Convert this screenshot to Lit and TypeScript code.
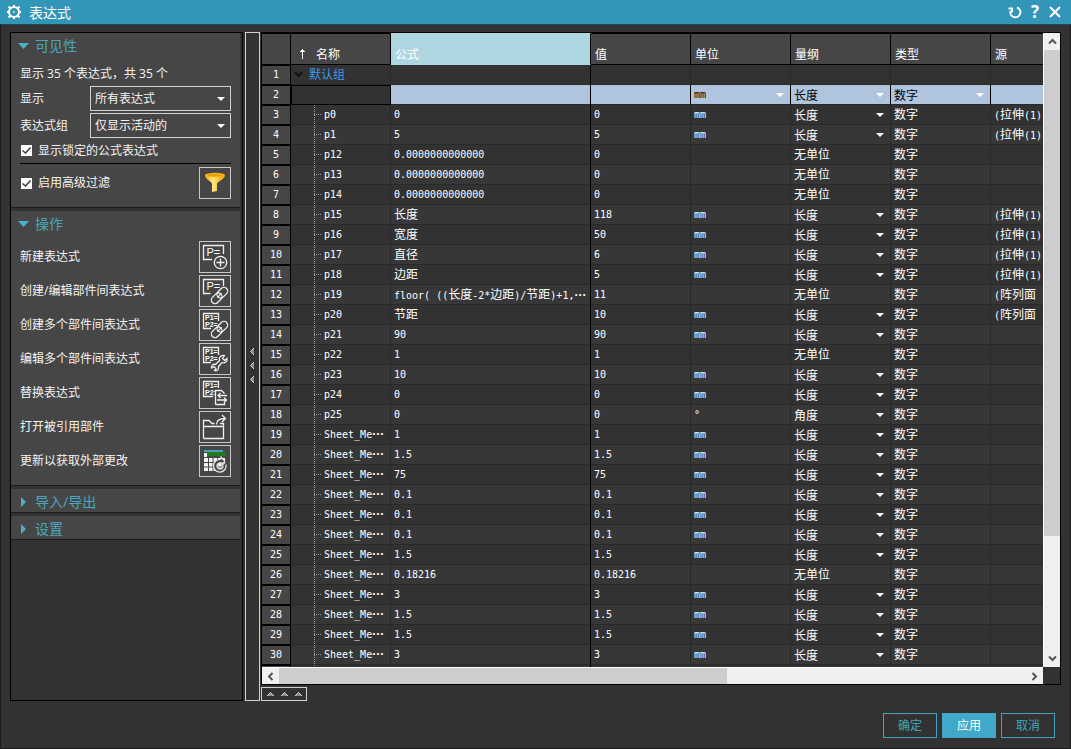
import { LitElement, html, css, nothing, TemplateResult } from "lit";
import { customElement, property } from "lit/decorators.js";
import { classMap } from "lit/directives/class-map.js";

interface Expression {
  name: string;
  formula: string;
  value: string;
  unit: string;
  dimension: string;
  source: string;
}

const LENGTH = "长度";
const NO_UNIT = "无单位";

function row(name: string, formula: string, value: string, unit = "mm", dimension = LENGTH, source = ""): Expression {
  return { name, formula, value, unit, dimension, source };
}

const sheet = (value: string, unit = "mm", dimension = LENGTH) => row("Sheet_Me···", value, value, unit, dimension);

const EXPRESSIONS: Expression[] = [
  row("p0", "0", "0", "mm", LENGTH, "(拉伸(1)"),
  row("p1", "5", "5", "mm", LENGTH, "(拉伸(1)"),
  row("p12", "0.0000000000000", "0", "", NO_UNIT),
  row("p13", "0.0000000000000", "0", "", NO_UNIT),
  row("p14", "0.0000000000000", "0", "", NO_UNIT),
  row("p15", "长度", "118", "mm", LENGTH, "(拉伸(1)"),
  row("p16", "宽度", "50", "mm", LENGTH, "(拉伸(1)"),
  row("p17", "直径", "6", "mm", LENGTH, "(拉伸(1)"),
  row("p18", "边距", "5", "mm", LENGTH, "(拉伸(1)"),
  row("p19", "floor( ((长度-2*边距)/节距)+1,···", "11", "", NO_UNIT, "(阵列面"),
  row("p20", "节距", "10", "mm", LENGTH, "(阵列面"),
  row("p21", "90", "90"),
  row("p22", "1", "1", "", NO_UNIT),
  row("p23", "10", "10"),
  row("p24", "0", "0"),
  row("p25", "0", "0", "°", "角度"),
  sheet("1"),
  sheet("1.5"),
  sheet("75"),
  sheet("0.1"),
  sheet("0.1"),
  sheet("0.1"),
  sheet("1.5"),
  sheet("0.18216", "", NO_UNIT),
  sheet("3"),
  sheet("1.5"),
  sheet("1.5"),
  sheet("3"),
];

/** Wraps the wide characters and the trailing dots of a mixed string in their own faces. */
function mixed(text: string) {
  return text
    .split(/([\u4e00-\u9fff]+|\u00b7+)/)
    .filter((part) => part)
    .map((part) => {
      if (part[0] === "\u00b7") return html`<span class="dots">${part}</span>`;
      return /[\u4e00-\u9fff]/.test(part) ? html`<span class="wide">${part}</span>` : part;
    });
}

const icons: Record<string, TemplateResult> = {
  filter: html`<svg viewBox="1 1 30 30">
    <defs>
      <linearGradient id="gold" x1="0" x2="1">
        <stop offset="0" stop-color="#f0a800" /><stop offset="0.4" stop-color="#ffe880" />
        <stop offset="1" stop-color="#e89a00" />
      </linearGradient>
    </defs>
    <path d="M6 8C6 13 13 14 13 17V25L18 24V17C18 14 26 13 26 8Z" fill="url(#gold)" />
    <ellipse cx="16" cy="8" rx="10" ry="2.2" fill="#f8b414" />
    <ellipse cx="16" cy="8.2" rx="7.5" ry="1.1" fill="#e0a010" />
  </svg>`,
  create: html`<svg viewBox="1 1 30 30" class="line">
    <path d="M13 18.500H4.500V4.500H24.500V13" />
    <text x="7.5" y="15" class="big">P=</text>
    <circle cx="21.5" cy="21.5" r="6.2" />
    <path d="M17.500 21.500H25.500M21.500 17.500V25.500" />
  </svg>`,
  link: html`<svg viewBox="1 1 30 30" class="line">
    <path d="M11.500 18.500H4.500V4.500H24.500V11" />
    <text x="7.5" y="15" class="big">P=</text>
    <g transform="rotate(-45 20.5 20.5)">
      <rect x="10.500" y="16.800" width="12" height="7.400" rx="3.700" />
      <rect x="18.500" y="16.800" width="12" height="7.400" rx="3.700" />
      <path d="M17.500 20.500H23.500" />
    </g>
  </svg>`,
  linkMany: html`<svg viewBox="1 1 30 30" class="line">
    <path d="M12 19.500H4.500V4.500H19.500V12" />
    <text x="6" y="11" class="small">P1=</text>
    <text x="6" y="18" class="small">P2=</text>
    <g transform="rotate(-45 20.5 20.5)">
      <rect x="10.500" y="16.800" width="12" height="7.400" rx="3.700" />
      <rect x="18.500" y="16.800" width="12" height="7.400" rx="3.700" />
      <path d="M17.500 20.500H23.500" />
    </g>
  </svg>`,
  editMany: html`<svg viewBox="1 1 30 30" class="line">
    <path d="M12 19.500H4.500V4.500H19.500V12" />
    <text x="6" y="11" class="small">P1=</text>
    <text x="6" y="18" class="small">P2=</text>
    <path
      d="M25.500 12.500C22 11.500 19.500 14.500 20.500 17.500L16.500 21.500C14 20.500 12 23 12.500 25L15 23.500L17 25.500L15.500 27.500C18 28.500 20.500 26 19.500 23.500L23 19.500C26 20.500 28.500 18.500 28 15.500L25.500 17.500L23.500 15.500Z" />
  </svg>`,
  replace: html`<svg viewBox="1 1 30 30" class="line">
    <path d="M14 19.500H4.500V4.500H19.500V11" />
    <text x="6" y="11" class="small">P1=</text>
    <text x="6" y="18" class="small">P2:</text>
    <path d="M16.500 27.500V13.500H22.500L25.500 16.500M16.500 27.500H25.500V25.500" />
    <path d="M28 18.500H19M21.500 16L19 18.500L21.500 21M18 23H27.500M25 20.500L27.500 23L25 25.500" />
  </svg>`,
  open: html`<svg viewBox="1 1 30 30" class="line">
    <path d="M4.500 27.500V9.500H10L13 12.500H15.500M4.500 15.500H24.500V27.500H4.500M21 12.500H24.500V15.500" />
    <path d="M17.500 13.500C17.500 9.500 20 7.500 26.500 7.500M23 4L26.500 7.500L23 11" />
  </svg>`,
  update: html`<svg viewBox="1 1 30 30">
    <rect x="5" y="5" width="19" height="2" fill="#4a9cb8" />
    <rect x="7" y="7" width="20" height="4" fill="#1e7a1e" />
    <path d="M5 8V26H26V12H8V8Z" fill="#f4f4f4" />
    <path d="M5 12.500H26M5 17.500H26M5 22H26M9.500 12V26M14 12V26M18.500 12V26M23 12V26" stroke="#464646" fill="none" />
    <g fill="none">
      <circle cx="21" cy="21" r="5" stroke="#464646" stroke-width="3.500" />
      <path d="M27 19.500A6.300 6.300 0 1 1 21.500 14.500M24 21A3 3 0 1 1 21.500 18H25.500M21.500 11.500L25.500 15.500V18L22 21"
        stroke="#e4e4e4" stroke-width="1.300" />
    </g>
  </svg>`,
};

const ACTIONS: Array<[string, string]> = [
  ["新建表达式", "create"],
  ["创建/编辑部件间表达式", "link"],
  ["创建多个部件间表达式", "linkMany"],
  ["编辑多个部件间表达式", "editMany"],
  ["替换表达式", "replace"],
  ["打开被引用部件", "open"],
  ["更新以获取外部更改", "update"],
];

const baseStyles = css`
  * {
    box-sizing: border-box;
  }
  button,
  input,
  select {
    margin: 0;
    padding: 0;
    font: inherit;
    color: inherit;
    border-radius: 0;
  }
  button {
    border: 0;
    background: none;
  }
`;

@customElement("panel-group")
class PanelGroup extends LitElement {
  @property() heading = "";
  @property({ type: Boolean }) open = false;

  static styles = [
    baseStyles,
    css`
      :host {
        display: block;
        background: #464646;
        border-bottom: 1px solid #1c1c1c;
      }
      .heading {
        display: flex;
        align-items: center;
        gap: 6px;
        width: 100%;
        height: 23px;
        padding: 3px 7px 0;
        font-size: 14px;
        line-height: 20px;
        color: #4aa6be;
      }
      .heading svg {
        width: 11px;
        height: 11px;
        fill: #4cb0c8;
      }
      .body {
        padding: 6px 9px 8px;
      }
    `,
  ];

  render() {
    return html`
      <button class="heading" aria-expanded=${this.open}>
        <svg viewBox="0 0 11 11"><path d=${this.open ? "M0 2H11L5.500 8Z" : "M3 0V10L8 5Z"} /></svg>
        <span>${this.heading}</span>
      </button>
      ${this.open ? html`<div class="body"><slot></slot></div>` : nothing}
    `;
  }
}

@customElement("scroll-rail")
class ScrollRail extends LitElement {
  @property({ type: Boolean, reflect: true }) vertical = false;
  @property({ type: Number }) extent = 50;

  static styles = [
    baseStyles,
    css`
      :host {
        display: flex;
        background: #f0f0f0;
        border-top: 1px solid #fff;
      }
      :host([vertical]) {
        flex-direction: column;
        border-top: 0;
        border-left: 1px solid #fff;
      }
      button {
        flex: none;
        display: grid;
        place-items: center;
        width: 17px;
        height: 100%;
      }
      :host([vertical]) button {
        width: 100%;
        height: 17px;
      }
      svg {
        width: 9px;
        height: 9px;
        fill: none;
        stroke: #555;
        stroke-width: 2;
      }
      .track {
        flex: 1;
      }
      .thumb {
        background: #cdcdcd;
        width: 100%;
        height: 100%;
      }
    `,
  ];

  render() {
    const size = this.vertical ? `height:${this.extent}%` : `width:${this.extent}%`;
    return html`
      <button aria-label="后退">
        <svg viewBox="0 0 9 9"><path d=${this.vertical ? "M1 6.500L4.500 3L8 6.500" : "M6.500 1L3 4.500L6.500 8"} /></svg>
      </button>
      <div class="track"><div class="thumb" style=${size}></div></div>
      <button aria-label="前进">
        <svg viewBox="0 0 9 9"><path d=${this.vertical ? "M1 2.500L4.500 6L8 2.500" : "M2.500 1L6 4.500L2.500 8"} /></svg>
      </button>
    `;
  }
}

@customElement("expression-table")
class ExpressionTable extends LitElement {
  static styles = [
    baseStyles,
    css`
      :host {
        display: block;
        overflow: hidden;
        font: 10px/16px "DejaVu Sans Mono", "Noto Sans CJK SC", monospace;
        color: #fff;
      }
      table {
        table-layout: fixed;
        width: 100%;
        min-width: 832px;
        border-collapse: separate;
        border-spacing: 0;
      }
      .col-number {
        width: 29px;
      }
      .col-formula {
        width: 200px;
      }
      .col {
        width: 100px;
      }
      th,
      td {
        padding: 0 0 0 3px;
        text-align: left;
        font-weight: normal;
        white-space: nowrap;
        overflow: hidden;
      }
      thead th {
        height: 32px;
        padding: 12px 0 0 4px;
        background: #464646;
        border: solid #000;
        border-width: 1px 1px 1px 0;
        font-size: 12px;
      }
      thead .active {
        background: #aed6e0;
        border-top-color: #aed6e0;
        border-bottom-color: #aed6e0;
      }
      .sorted {
        display: flex;
        align-items: center;
        gap: 9px;
        padding-left: 3px;
      }
      .sorted svg {
        width: 9px;
        height: 12px;
        fill: #fff;
      }
      td {
        height: 20px;
        background: #323232;
        border: solid #292929;
        border-width: 0 1px 1px 0;
      }
      tr:nth-child(even) td {
        background-color: #373737;
      }
      tbody th {
        height: 20px;
        padding: 0;
        text-align: center;
        background: #464646;
        border: solid #000;
        border-width: 1px 1px 1px 0;
      }
      td.formula {
        border-right-color: #000;
      }
      .wide {
        font: 12px/16px "Noto Sans CJK SC", sans-serif;
      }
      .dots {
        font: bold 12px/14px "Liberation Sans", sans-serif;
      }
      .group {
        display: flex;
        align-items: center;
        gap: 6px;
        font-size: 12px;
        color: #3c98ea;
      }
      .group svg {
        width: 9px;
        height: 9px;
        fill: none;
        stroke: #111;
        stroke-width: 2;
      }
      td.name {
        padding-left: 33px;
        background-image: repeating-linear-gradient(#999 0 1px, transparent 1px 2px),
          repeating-linear-gradient(90deg, #999 0 1px, transparent 1px 2px);
        background-size: 1px 20px, 8px 1px;
        background-position: 23px 0, 23px 9px;
        background-repeat: no-repeat;
      }
      tr.entry td {
        background-color: #b0c4de;
        border-right-color: #000;
        color: #000;
      }
      tr.entry td:nth-child(2) {
        background-color: #323232;
        border-color: #000;
        border-left-width: 1px;
        border-top-width: 1px;
      }
      input {
        display: block;
        width: 100%;
        height: 16px;
        border: 0;
        background: none;
      }
      select {
        display: block;
        width: 100%;
        height: 18px;
        border: 0;
        appearance: none;
        font: 12px/16px "Noto Sans CJK SC", sans-serif;
        background: url('data:image/svg+xml,<svg xmlns="http://www.w3.org/2000/svg" width="8" height="4"><path d="M0 0H8L4 4Z" fill="white"/></svg>')
          no-repeat right 6px center;
      }
      select.narrow {
        font: inherit;
      }
    `,
  ];

  private choice(value: string, label: string, narrow = false) {
    return html`<select class=${classMap({ narrow })} aria-label=${label}>
      <option>${value}</option>
    </select>`;
  }

  render() {
    return html`
      <table>
        <colgroup>
          <col class="col-number" />
          <col class="col" />
          <col class="col-formula" />
          <col class="col" />
          <col class="col" />
          <col class="col" />
          <col class="col" />
          <col />
        </colgroup>
        <thead>
          <tr>
            <th></th>
            <th>
              <div class="sorted">
                <svg viewBox="0 0 9 12"><path d="M4 10V3H2V2H3V1H4V0H5V1H6V2H7V3H5V10Z" /></svg>
                <span>名称</span>
              </div>
            </th>
            <th class="active">公式</th>
            <th>值</th>
            <th>单位</th>
            <th>量纲</th>
            <th>类型</th>
            <th>源</th>
          </tr>
        </thead>
        <tbody>
          <tr>
            <th>1</th>
            <td>
              <div class="group">
                <svg viewBox="0 0 9 9"><path d="M1 2L4.500 6L8 2" /></svg>
                <span>默认组</span>
              </div>
            </td>
            <td class="formula"></td>
            <td></td>
            <td></td>
            <td></td>
            <td></td>
            <td></td>
          </tr>
          <tr class="entry">
            <th>2</th>
            <td><input aria-label="名称" /></td>
            <td><input aria-label="公式" /></td>
            <td></td>
            <td>${this.choice("mm", "单位", true)}</td>
            <td>${this.choice("长度", "量纲")}</td>
            <td>${this.choice("数字", "类型")}</td>
            <td></td>
          </tr>
          ${EXPRESSIONS.map(
            (e, i) => html`<tr>
              <th>${i + 3}</th>
              <td class="name">${mixed(e.name)}</td>
              <td class="formula">${mixed(e.formula)}</td>
              <td>${e.value}</td>
              <td>${e.unit}</td>
              <td>${e.dimension === NO_UNIT ? mixed(e.dimension) : this.choice(e.dimension, "量纲")}</td>
              <td>${mixed("数字")}</td>
              <td>${mixed(e.source)}</td>
            </tr>`
          )}
          <tr>
            <th></th>
            <td class="name"></td>
            <td class="formula"></td>
            <td></td>
            <td></td>
            <td></td>
            <td></td>
            <td></td>
          </tr>
        </tbody>
      </table>
    `;
  }
}

@customElement("app-root")
class AppRoot extends LitElement {
  static styles = [
    baseStyles,
    css`
      :host {
        display: flex;
        flex-direction: column;
        height: 100vh;
        background: #323232;
        color: #f4f4f4;
        font: 12px/18px "Open Sans", "Noto Sans CJK SC", sans-serif;
      }
      .title {
        display: flex;
        align-items: center;
        gap: 7px;
        height: 24px;
        padding: 0 8px 0 6px;
        background: #3296b8;
        color: #fff;
      }
      .title h1 {
        flex: 1;
        margin: 0;
        padding-top: 2px;
        font-size: 14px;
        line-height: 20px;
        font-weight: normal;
      }
      .title svg {
        display: block;
        width: 16px;
        height: 16px;
        fill: none;
        stroke: #fff;
        stroke-width: 2;
      }
      .tools {
        display: flex;
        align-items: center;
        gap: 4px;
      }
      .tools .help {
        width: 16px;
        font: bold 17px/20px "Open Sans", sans-serif;
      }
      .frame {
        flex: 1;
        min-height: 0;
        display: flex;
        flex-direction: column;
        border: 1px solid #1b1b1b;
        border-top-color: #20485a;
      }
      .main {
        flex: 1;
        min-height: 0;
        display: flex;
        padding: 7px 9px 0;
      }
      .side {
        flex: none;
        display: flex;
        flex-direction: column;
        gap: 3px;
        width: 233px;
        margin-right: 2px;
        padding-right: 2px;
        border: 1px solid #000;
      }
      .count {
        margin: 0;
        line-height: 24px;
      }
      .field {
        display: flex;
        align-items: center;
        justify-content: space-between;
        height: 25px;
        margin-bottom: 2px;
      }
      .field.last {
        margin-bottom: 0;
      }
      .field select {
        width: 141px;
        height: 25px;
        padding: 0 4px;
        border: 1px solid #d0d0d0;
        appearance: none;
        background: url('data:image/svg+xml,<svg xmlns="http://www.w3.org/2000/svg" width="8" height="4"><path d="M0 0H8L4 4Z" fill="white"/></svg>')
          no-repeat right 5px center;
      }
      .check {
        display: flex;
        align-items: center;
        gap: 5px;
        height: 25px;
      }
      .check input {
        appearance: none;
        width: 13px;
        height: 13px;
        border: 1px solid #464646;
        background: #fff
          url('data:image/svg+xml,<svg xmlns="http://www.w3.org/2000/svg" width="11" height="11"><path d="M1.500 5.500L4.500 8L9.500 2.500" fill="none" stroke="rgb(60,60,60)" stroke-width="1.500"/></svg>')
          center no-repeat;
      }
      .filter {
        display: flex;
        align-items: center;
        justify-content: space-between;
        padding-top: 3px;
        border-top: 1px solid #000;
      }
      .actions {
        display: grid;
        gap: 2px;
        margin: 0;
        padding: 1px 0 0;
        list-style: none;
      }
      .actions li {
        display: flex;
        align-items: center;
        justify-content: space-between;
      }
      .icon {
        width: 32px;
        height: 32px;
        border: 1px solid #c8c8c8;
      }
      .icon svg {
        display: block;
        width: 30px;
        height: 30px;
      }
      .icon .line {
        fill: none;
        stroke: #f0f0f0;
        stroke-width: 1.3;
      }
      .icon text {
        fill: #fff;
        stroke: none;
        font-family: "Liberation Sans", sans-serif;
      }
      .icon .big {
        font-size: 11px;
      }
      .icon .small {
        font-size: 7px;
        font-weight: bold;
      }
      .splitter {
        flex: none;
        display: flex;
        flex-direction: column;
        align-items: center;
        justify-content: center;
        gap: 7px;
        width: 15px;
        margin-right: 1px;
        padding: 0 1px 2px 0;
        border: 1px solid #d0d0d0;
      }
      .splitter svg,
      .drawer svg {
        fill: #8a8a8a;
        stroke: #d8d8d8;
      }
      .splitter svg {
        width: 4px;
        height: 7px;
      }
      .content {
        flex: 1;
        min-width: 0;
        display: flex;
        flex-direction: column;
        gap: 2px;
      }
      .viewport {
        flex: 1;
        min-height: 0;
        display: grid;
        grid-template: minmax(0, 1fr) 17px / minmax(0, 1fr) 17px;
        border: 1px solid #000;
      }
      .drawer {
        display: flex;
        align-items: center;
        justify-content: center;
        gap: 7px;
        width: 46px;
        height: 14px;
        border: 1px solid #d0d0d0;
      }
      .drawer svg {
        width: 7px;
        height: 4px;
      }
      .footer {
        display: flex;
        justify-content: flex-end;
        gap: 5px;
        padding: 12px 15px 10px;
      }
      .footer button {
        width: 54px;
        height: 25px;
        border: 1px solid #42a4be;
        color: #42a4be;
      }
      .footer .primary {
        background: #40a8c8;
        color: #fff;
      }
    `,
  ];

  render() {
    const left = html`<svg viewBox="0 0 4 7"><path d="M4 0L0.500 3.500L4 7" /></svg>`;
    const up = html`<svg viewBox="0 0 7 4"><path d="M0 4L3.500 0.500L7 4" /></svg>`;
    return html`
      <header class="title">
        <svg viewBox="0 0 16 16">
          <circle cx="8" cy="8" r="5" />
          <path
            d="M8 1V3.500M8 12.500V15M1 8H3.500M12.500 8H15M2.500 2.500L5 5M11 11L13.500 13.500M13.500 2.500L11 5M5 11L2.500 13.500" />
          <circle cx="8" cy="8" r="0.500" stroke-width="1" />
        </svg>
        <h1>表达式</h1>
        <div class="tools">
          <button aria-label="重置">
            <svg viewBox="0 0 16 16"><path d="M10 3.500A5 5 0 1 1 3.500 7M1.500 4.500H5V8.500" /></svg>
          </button>
          <button class="help" aria-label="帮助">?</button>
          <button aria-label="关闭">
            <svg viewBox="0 0 16 16"><path d="M3 3L13 13M13 3L3 13" /></svg>
          </button>
        </div>
      </header>
      <div class="frame">
        <main class="main">
          <aside class="side">
            <panel-group heading="可见性" open>
              <p class="count">显示 35 个表达式，共 35 个</p>
              <div class="field">
                <label for="show">显示</label>
                <select id="show"><option>所有表达式</option></select>
              </div>
              <div class="field last">
                <label for="group">表达式组</label>
                <select id="group"><option>仅显示活动的</option></select>
              </div>
              <label class="check"><input type="checkbox" checked />显示锁定的公式表达式</label>
              <div class="filter">
                <label class="check"><input type="checkbox" checked />启用高级过滤</label>
                <button class="icon" aria-label="过滤">${icons.filter}</button>
              </div>
            </panel-group>
            <panel-group heading="操作" open>
              <ul class="actions">
                ${ACTIONS.map(
                  ([label, icon]) => html`<li>
                    <label for=${icon}>${label}</label>
                    <button class="icon" id=${icon}>${icons[icon]}</button>
                  </li>`
                )}
              </ul>
            </panel-group>
            <panel-group heading="导入/导出"></panel-group>
            <panel-group heading="设置"></panel-group>
          </aside>
          <button class="splitter" aria-label="折叠侧栏">${left}${left}${left}</button>
          <section class="content">
            <div class="viewport">
              <expression-table></expression-table>
              <scroll-rail vertical extent="81"></scroll-rail>
              <scroll-rail extent="60"></scroll-rail>
            </div>
            <button class="drawer" aria-label="展开">${up}${up}${up}</button>
          </section>
        </main>
        <footer class="footer">
          <button>确定</button>
          <button class="primary">应用</button>
          <button>取消</button>
        </footer>
      </div>
    `;
  }
}
